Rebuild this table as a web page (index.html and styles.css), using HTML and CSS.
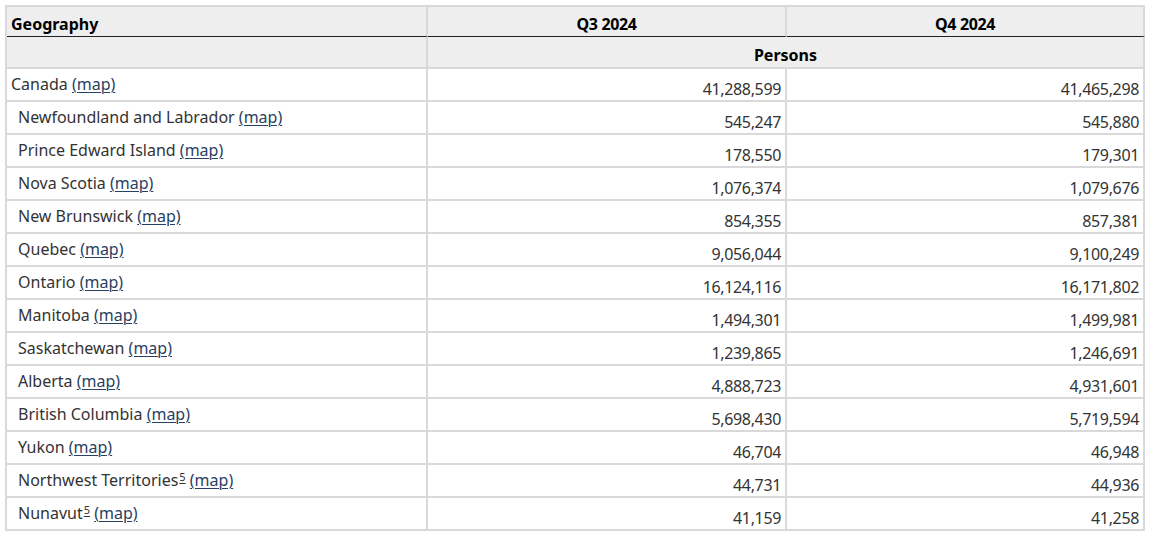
FILE: index.html
```html
<!DOCTYPE html>
<html lang="en">
<head>
<meta charset="utf-8">
<title>Population estimates</title>
<link rel="stylesheet" href="styles.css">
</head>
<body>
<div class="wrap">
<table class="data">
  <colgroup>
    <col class="c-geo">
    <col class="c-q">
    <col class="c-q2">
  </colgroup>
  <thead>
    <tr class="h1">
      <th class="left">Geography</th>
      <th class="qt">Q3 2024</th>
      <th class="qt">Q4 2024</th>
    </tr>
    <tr class="h2">
      <th></th>
      <th colspan="2">Persons</th>
    </tr>
  </thead>
  <tbody>
    <tr><td>Canada <a href="#">(map)</a></td><td class="num">41,288,599</td><td class="num">41,465,298</td></tr>
    <tr><td class="ind">Newfoundland and Labrador <a href="#">(map)</a></td><td class="num">545,247</td><td class="num">545,880</td></tr>
    <tr><td class="ind">Prince Edward Island <a href="#">(map)</a></td><td class="num">178,550</td><td class="num">179,301</td></tr>
    <tr><td class="ind">Nova Scotia <a href="#">(map)</a></td><td class="num">1,076,374</td><td class="num">1,079,676</td></tr>
    <tr><td class="ind">New Brunswick <a href="#">(map)</a></td><td class="num">854,355</td><td class="num">857,381</td></tr>
    <tr><td class="ind">Quebec <a href="#">(map)</a></td><td class="num">9,056,044</td><td class="num">9,100,249</td></tr>
    <tr><td class="ind">Ontario <a href="#">(map)</a></td><td class="num">16,124,116</td><td class="num">16,171,802</td></tr>
    <tr><td class="ind">Manitoba <a href="#">(map)</a></td><td class="num">1,494,301</td><td class="num">1,499,981</td></tr>
    <tr><td class="ind">Saskatchewan <a href="#">(map)</a></td><td class="num">1,239,865</td><td class="num">1,246,691</td></tr>
    <tr><td class="ind">Alberta <a href="#">(map)</a></td><td class="num">4,888,723</td><td class="num">4,931,601</td></tr>
    <tr><td class="ind">British Columbia <a href="#">(map)</a></td><td class="num">5,698,430</td><td class="num">5,719,594</td></tr>
    <tr><td class="ind">Yukon <a href="#">(map)</a></td><td class="num">46,704</td><td class="num">46,948</td></tr>
    <tr><td class="ind">Northwest Territories<sup><a class="fn" href="#">5</a></sup> <a href="#">(map)</a></td><td class="num">44,731</td><td class="num">44,936</td></tr>
    <tr><td class="ind">Nunavut<sup><a class="fn" href="#">5</a></sup> <a href="#">(map)</a></td><td class="num">41,159</td><td class="num">41,258</td></tr>
  </tbody>
</table>
</div>
</body>
</html>
```

FILE: styles.css
```css
html, body {
  margin: 0;
  padding: 0;
  background: #fff;
}

.wrap {
  padding: 5px;
}

.data {
  border-collapse: separate;
  border-spacing: 0;
  table-layout: fixed;
  width: 1140px;
  border-top: 2px solid #d9d9d9;
  border-left: 2px solid #d9d9d9;
  font-family: "Noto Sans", "Open Sans", sans-serif;
  font-size: 16px;
  line-height: 21px;
  color: #333;
}

.c-geo { width: 421px; }
.c-q { width: 359px; }
.c-q2 { width: 358px; }

.data th,
.data td {
  border-right: 2px solid #d9d9d9;
  border-bottom: 2px solid #d9d9d9;
  padding: 5px 4px 5px 4px;
}

.data thead th {
  background: #eeeeee;
  color: #000;
  font-weight: 700;
  text-align: center;
  vertical-align: bottom;
}

.data thead th.left {
  text-align: left;
}

.data thead th.qt {
  letter-spacing: -0.4px;
}

.h1 th {
  height: 21px;
  padding-top: 7px;
  padding-bottom: 1px;
  border-bottom: 1px solid #222 !important;
}

.h2 th {
  height: 21px;
  padding-top: 8px;
  padding-bottom: 1px;
}

.data td {
  height: 21px;
  vertical-align: top;
}

.data td.ind {
  padding-left: 11px;
}

.data td.num {
  text-align: right;
  letter-spacing: -0.35px;
  padding-top: 10px;
  padding-bottom: 0;
}

.data a {
  color: #284162;
  text-decoration: underline;
  text-underline-offset: 2px;
  text-decoration-thickness: 1px;
}

.data sup {
  font-size: 11px;
  line-height: 0;
  vertical-align: 5px;
  padding-left: 1px;
}

.data a.fn {
  color: #333;
}
```
